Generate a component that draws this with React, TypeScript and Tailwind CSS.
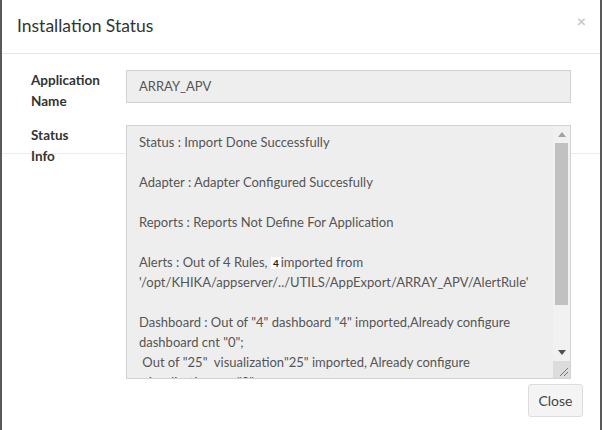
import React from "react";

const lines: React.ReactNode[] = [
  "Status : Import Done Successfully",
  "",
  "Adapter : Adapter Configured Succesfully",
  "",
  "Reports : Reports Not Define For Application",
  "",
  <>
    Alerts : Out of 4 Rules,{" "}
    <span className="bg-white px-[2px] text-[10px] font-bold text-[#222]">4</span>imported from
  </>,
  "'/opt/KHIKA/appserver/../UTILS/AppExport/ARRAY_APV/AlertRule'",
  "",
  'Dashboard : Out of "4" dashboard "4" imported,Already configure',
  'dashboard cnt "0";',
  '\u00a0Out of "25"  visualization"25" imported, Already configure',
  '\u00a0visualization cnt "0";',
];

const FakeScrollbar = () => (
  <div className="flex w-[17px] flex-col bg-[#f1f1f1]">
    <div className="flex h-[17px] items-center justify-center">
      <svg width="8" height="5" viewBox="0 0 8 5">
        <path d="M0 5 L4 0 L8 5 Z" fill="#a3a3a3" />
      </svg>
    </div>
    <div className="mx-[2px] h-[162px] bg-[#c1c1c1]" />
    <div className="flex-1" />
    <div className="flex h-[17px] items-center justify-center">
      <svg width="8" height="5" viewBox="0 0 8 5">
        <path d="M0 0 L8 0 L4 5 Z" fill="#505050" />
      </svg>
    </div>
    <div className="flex h-[17px] items-end justify-end bg-[#dcdcdc] p-[2px]">
      <svg width="10" height="10" viewBox="0 0 10 10">
        <path d="M2 10 L10 2 M6 10 L10 6" stroke="#777" strokeWidth="1" />
      </svg>
    </div>
  </div>
);

export default function App() {
  return (
    <div className="relative h-[430px] w-[602px] overflow-hidden border-x-2 border-[#595959] bg-white font-['Lato','Open_Sans',sans-serif] text-[14px] text-[#333]">
      <div className="flex h-[54px] items-center justify-between border-b border-[#e5e5e5] pl-[15px] pr-[14px]">
        <h4 className="pb-[2px] text-[17.5px] leading-none text-[#333]">Installation Status</h4>
        <span className="mb-[12px] text-[16px] font-bold leading-none text-[#c8c8c8]">×</span>
      </div>

      <div className="relative pt-[15px]">
        <div className="absolute left-0 right-0 top-[99px] h-px bg-[#ececec]" />

        <div className="relative grid grid-cols-[124px_445px] gap-y-[13px]">
          <div className="pl-[29px] pt-[1px] text-[13.5px] font-bold leading-[21px] text-[#333]">
            Application
            <br />
            Name
          </div>
          <div className="mt-px flex h-[33px] items-center border border-[#d2d2d2] bg-[#eee] px-[12px] text-[13px] text-[#555]">
            ARRAY_APV
          </div>

          <div className="pl-[29px] text-[13.5px] font-bold leading-[21px] text-[#333]">
            Status
            <br />
            Info
          </div>
          <div className="flex h-[254px] border border-[#d2d2d2] bg-[#eee]">
            <div className="flex-1 overflow-hidden whitespace-pre px-[12px] pt-[6px] text-[13px] leading-[20px] text-[#555]">
              {lines.map((l, i) => (
                <div key={i} className="h-[20px]">
                  {l}
                </div>
              ))}
            </div>
            <FakeScrollbar />
          </div>
        </div>

        <div className="flex justify-end pr-[17px] pt-[5px]">
          <button className="h-[33px] w-[55px] rounded-[3px] border border-[#ddd] bg-[#f4f4f4] text-[14px] text-[#444]">
            Close
          </button>
        </div>
      </div>
    </div>
  );
}
